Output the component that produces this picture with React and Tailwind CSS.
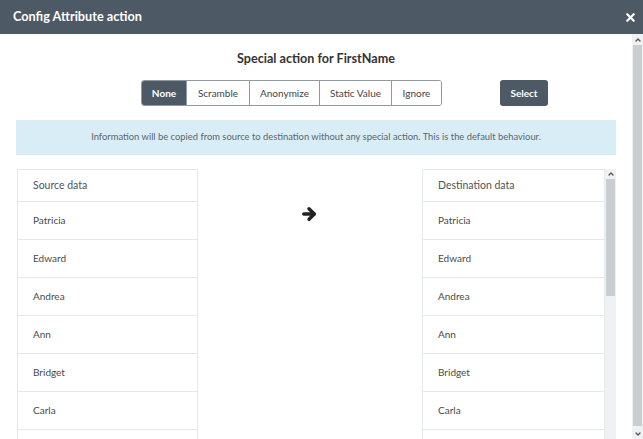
import { X, ArrowRight, ChevronUp, ChevronDown } from "lucide-react";

const names = ["Patricia", "Edward", "Andrea", "Ann", "Bridget", "Carla"];
const modes = [
  ["None", "w-[44px]"],
  ["Scramble", "w-[63px]"],
  ["Anonymize", "w-[70px]"],
  ["Static Value", "w-[72px]"],
  ["Ignore", "w-[50px]"],
];

function DataList({ title }) {
  return (
    <div className="border-x border-[#e6e9eb] bg-white">
      <div className="h-[33px] flex items-center pl-[15px] border-t border-b border-[#e6e9eb] text-[10.5px] text-[#4a5560]">
        {title}
      </div>
      {names.map((n) => (
        <div
          key={n}
          className="h-[38px] flex items-center pl-[15px] border-b border-[#e6e9eb] text-[10px] text-[#4a4a4a]"
        >
          {n}
        </div>
      ))}
      <div className="h-[38px]" />
    </div>
  );
}

export default function App() {
  return (
    <div className="w-[643px] h-[439px] overflow-hidden bg-white flex flex-col" style={{ fontFamily: "Lato, 'Open Sans', sans-serif" }}>
      {/* header */}
      <div className="h-[34px] shrink-0 bg-[#4d5965] flex items-center justify-between pl-[13px] pr-[6px]">
        <span className="text-white text-[12.7px] font-bold">Config Attribute action</span>
        <X size={13} strokeWidth={4} className="text-white" />
      </div>

      <div className="flex flex-1 min-h-0">
        {/* body */}
        <div className="flex-1 px-4 overflow-hidden">
          <div className="pt-[15px] text-center text-[12.6px] font-bold text-[#333] leading-[20px]">
            Special action for FirstName
          </div>

          <div className="mt-[11px] flex items-center pl-[125px]">
            <div className="flex h-[26px] rounded-[3px] border border-[#8f9aa3] overflow-hidden text-[10px]">
              {modes.map(([m, w], i) => (
                <div
                  key={m}
                  className={
                    i === 0
                      ? `${w} justify-center flex items-center bg-[#4d5965] text-white font-bold`
                      : `${w} justify-center flex items-center bg-white text-[#444] border-l border-[#8f9aa3]`
                  }
                >
                  {m}
                </div>
              ))}
            </div>
            <div className="ml-auto mr-[68px] h-[26px] w-[48px] rounded-[3px] bg-[#4d5965] text-white text-[10px] font-bold flex items-center justify-center">
              Select
            </div>
          </div>

          <div className="mt-[14px] h-[35px] bg-[#d9edf6] flex items-center justify-center text-[9.4px] text-[#5a6670]">
            Information will be copied from source to destination without any special action. This is the default behaviour.
          </div>

          <div className="mt-[14px] flex">
            <div className="w-[182px] pl-px">
              <DataList title="Source data" />
            </div>
            <div className="flex-1 flex justify-center pt-[36px]">
              <ArrowRight size={18} strokeWidth={4.5} className="text-[#222] ml-[-2px]" />
            </div>
            <div className="w-[194px] flex">
              <div className="flex-1">
                <DataList title="Destination data" />
              </div>
              <div className="w-[11px] bg-[#f0f1f2] flex flex-col">
                <div className="h-[10px] flex items-center justify-center">
                  <ChevronUp size={8} strokeWidth={4} className="text-[#555]" />
                </div>
                <div className="h-[117px] mx-[1px] bg-[#c9ced1]" />
              </div>
            </div>
          </div>
        </div>

        {/* outer scrollbar */}
        <div className="w-[11px] bg-[#f0f1f2] flex flex-col">
          <div className="h-[11px] flex items-center justify-center">
            <ChevronUp size={8} strokeWidth={4} className="text-[#555]" />
          </div>
          <div className="flex-1 mx-[1px] mb-[2px] bg-[#c9ced1]" />
          <div className="h-[11px] flex items-center justify-center">
            <ChevronDown size={8} strokeWidth={4} className="text-[#555]" />
          </div>
        </div>
      </div>
    </div>
  );
}
